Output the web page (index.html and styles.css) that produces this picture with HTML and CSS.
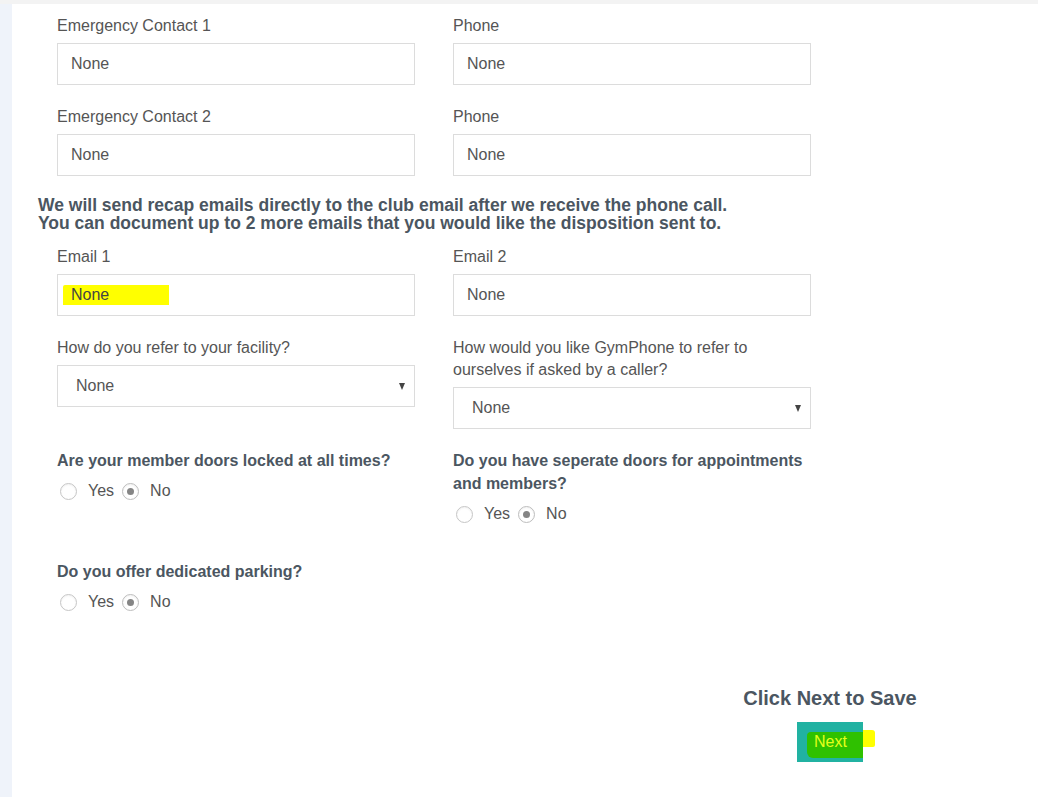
FILE: index.html
```html
<!DOCTYPE html>
<html lang="en">
<head>
<meta charset="utf-8">
<title>Club Setup</title>
<link rel="stylesheet" href="styles.css">
</head>
<body>
<div class="topbar"></div>
<div class="layout">
  <aside class="sidebar"></aside>
  <main class="main">
    <div class="row">
      <div class="col field">
        <div class="label">Emergency Contact 1</div>
        <div class="input">None</div>
      </div>
      <div class="col field">
        <div class="label">Phone</div>
        <div class="input">None</div>
      </div>
    </div>
    <div class="row">
      <div class="col field">
        <div class="label">Emergency Contact 2</div>
        <div class="input">None</div>
      </div>
      <div class="col field">
        <div class="label">Phone</div>
        <div class="input">None</div>
      </div>
    </div>
    <p class="note">We will send recap emails directly to the club email after we receive the phone call.<br>You can document up to 2 more emails that you would like the disposition sent to.</p>
    <div class="row">
      <div class="col field">
        <div class="label">Email 1</div>
        <div class="input"><span class="mark">None</span></div>
      </div>
      <div class="col field">
        <div class="label">Email 2</div>
        <div class="input">None</div>
      </div>
    </div>
    <div class="row">
      <div class="col field">
        <div class="label">How do you refer to your facility?</div>
        <div class="select"><span>None</span><span class="arrow"></span></div>
      </div>
      <div class="col field">
        <div class="label">How would you like GymPhone to refer to<br>ourselves if asked by a caller?</div>
        <div class="select"><span>None</span><span class="arrow"></span></div>
      </div>
    </div>
    <div class="row qrow">
      <div class="col question">
        <div class="qtitle">Are your member doors locked at all times?</div>
        <div class="radios">
          <span class="radio"></span><span class="opt">Yes</span>
          <span class="radio checked"></span><span class="opt">No</span>
        </div>
      </div>
      <div class="col question">
        <div class="qtitle">Do you have seperate doors for appointments<br>and members?</div>
        <div class="radios">
          <span class="radio"></span><span class="opt">Yes</span>
          <span class="radio checked"></span><span class="opt">No</span>
        </div>
      </div>
    </div>
    <div class="row qrow">
      <div class="col question">
        <div class="qtitle">Do you offer dedicated parking?</div>
        <div class="radios">
          <span class="radio"></span><span class="opt">Yes</span>
          <span class="radio checked"></span><span class="opt">No</span>
        </div>
      </div>
    </div>
    <div class="footer">
      <div class="save">Click Next to Save</div>
      <button class="next" type="button"><span class="next-text">Next</span></button>
    </div>
  </main>
</div>
</body>
</html>
```
FILE: styles.css
```css
* { box-sizing: border-box; }
html, body {
  margin: 0;
  padding: 0;
  background: #ffffff;
  font-family: "Liberation Sans", Arial, Helvetica, sans-serif;
  color: #555555;
}
.topbar {
  height: 4px;
  background: #f3f3f3;
}
.layout {
  display: flex;
  min-height: 793px;
}
.sidebar {
  width: 12px;
  flex: 0 0 12px;
  background: #eff3fa;
}
.main {
  flex: 1;
  padding: 10px 0 0 26px;
}
.row {
  display: grid;
  grid-template-columns: 396px 396px;
}
.col {
  padding: 0 19px;
}
.field {
  margin-bottom: 20px;
}
.label {
  font-size: 16px;
  line-height: 22px;
  padding-top: 1px;
  margin-bottom: 6px;
  color: #555555;
}
.input, .select {
  height: 42px;
  border: 1px solid #dcdcdc;
  font-size: 16px;
  color: #555555;
  display: flex;
  align-items: center;
  background: #fff;
}
.input {
  padding-left: 13px;
}
.select {
  padding: 0 9px 0 18px;
  justify-content: space-between;
}
.arrow {
  width: 0;
  height: 0;
  border-left: 3.5px solid transparent;
  border-right: 3.5px solid transparent;
  border-top: 7px solid #444;
  margin-top: 1px;
}
.mark {
  display: inline-block;
  background: #ffff00;
  line-height: 20px;
  margin-left: -8px;
  padding: 0 60px 0 8px;
  color: #444;
  border-top-left-radius: 2px;
}
.note {
  margin: 0 0 13px 0;
  font-size: 17.5px;
  line-height: 18px;
  font-weight: bold;
  color: #4b5661;
}
.qrow {
  margin-top: 0;
}
.qrow + .qrow {
  margin-top: 34px;
}
.question .qtitle {
  font-size: 16px;
  line-height: 23px;
  font-weight: bold;
  color: #4b5661;
}
.radios {
  margin-top: 7px;
  height: 24px;
  display: flex;
  align-items: center;
  font-size: 16px;
  color: #555;
}
.radio {
  width: 17px;
  height: 17px;
  border-radius: 50%;
  border: 1px solid #c6c6c6;
  background: #fff;
  margin-left: 3px;
  box-shadow: inset 0 1px 2px rgba(0,0,0,0.06);
  display: inline-flex;
  align-items: center;
  justify-content: center;
}
.radio.checked {
  margin-left: 8px;
  border-color: #bdbdbd;
}
.radio.checked::after {
  content: "";
  width: 7px;
  height: 7px;
  border-radius: 50%;
  background: #858585;
}
.opt {
  margin-left: 11px;
}
.footer {
  margin: 72px 0 0 672px;
  width: 240px;
  display: flex;
  flex-direction: column;
  align-items: center;
}
.save {
  font-size: 20px;
  line-height: 24px;
  font-weight: bold;
  color: #4b5661;
}
.next {
  position: relative;
  margin-top: 12px;
  width: 66px;
  height: 40px;
  border: 0;
  padding: 0 0 0 17px;
  background: #21b2a2;
  font-family: "Liberation Sans", Arial, sans-serif;
  font-size: 16px;
  text-align: left;
  cursor: pointer;
}
.next::before {
  content: "";
  position: absolute;
  left: 10px;
  right: 0;
  top: 10px;
  bottom: 4px;
  background: #2fc100;
  border-radius: 4px 0 0 6px;
}
.next::after {
  content: "";
  position: absolute;
  left: 66px;
  width: 12px;
  top: 8px;
  height: 17px;
  background: #ffff00;
  border-radius: 0 3px 2px 0;
}
.next-text {
  position: relative;
  color: #e4ff1c;
}
```
